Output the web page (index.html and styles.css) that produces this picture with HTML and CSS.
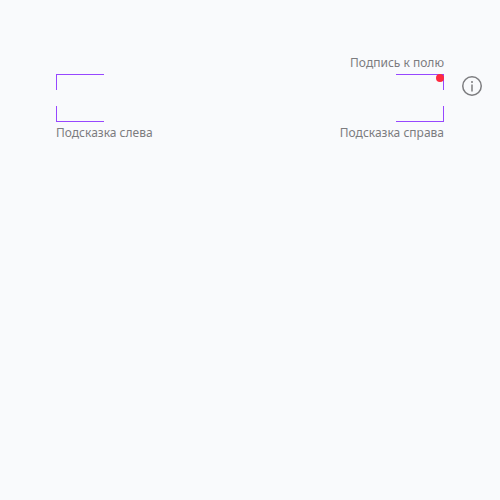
FILE: index.html
```html
<!DOCTYPE html>
<html lang="ru">
<head>
<meta charset="utf-8">
<title>Поле ввода</title>
<link rel="stylesheet" href="styles.css">
</head>
<body>
<main class="form">
  <div class="field">
    <label class="caption" for="field-input">Подпись к полю</label>
    <div class="control">
      <input class="input" id="field-input" type="text" aria-describedby="hint-left hint-right" required>
      <span class="corner top-left"></span>
      <span class="corner top-right"></span>
      <span class="corner bottom-left"></span>
      <span class="corner bottom-right"></span>
      <span class="indicator"></span>
      <button class="info" type="button" aria-label="Информация">
        <svg viewBox="0 0 24 24" width="24" height="24" fill="none" stroke="currentColor" stroke-width="1.5" aria-hidden="true">
          <circle cx="12" cy="12" r="9.25"/>
          <path d="M12 10.5V17.5"/>
          <circle cx="12" cy="8" r="1" fill="currentColor" stroke="none"/>
        </svg>
      </button>
    </div>
    <div class="hints">
      <span id="hint-left">Подсказка слева</span>
      <span id="hint-right">Подсказка справа</span>
    </div>
  </div>
</main>
</body>
</html>
```

FILE: styles.css
```css
body {
  margin: 0;
  background: #f9fafc;
  color: #7c7c7f;
  font: 12px/16px "Noto Sans", sans-serif;
}

.form {
  padding: 55px 56px;
}

.field {
  display: flex;
  flex-direction: column;
}

.caption {
  align-self: flex-end;
  margin-bottom: 3px;
}

.control {
  position: relative;
  height: 48px;
}

.input {
  box-sizing: border-box;
  width: 100%;
  height: 100%;
  padding: 0 16px;
  border: 0;
  outline: 0;
  background: transparent;
  font: inherit;
}

.corner {
  position: absolute;
  box-sizing: border-box;
  width: 48px;
  height: 16px;
  border: 0 solid #9747ff;
  pointer-events: none;
}

.top-left {
  top: 0;
  left: 0;
  border-width: 1px 0 0 1px;
}

.top-right {
  top: 0;
  right: 0;
  border-width: 1px 1px 0 0;
}

.bottom-left {
  bottom: 0;
  left: 0;
  border-width: 0 0 1px 1px;
}

.bottom-right {
  right: 0;
  bottom: 0;
  border-width: 0 1px 1px 0;
}

.indicator {
  position: absolute;
  top: 0;
  right: 0;
  width: 8px;
  height: 8px;
  border-radius: 50%;
  background: #ff293e;
}

.info {
  position: absolute;
  top: 0;
  left: 100%;
  display: flex;
  margin-left: 16px;
  padding: 0;
  border: 0;
  background: transparent;
  color: #7c7c7f;
}

.hints {
  display: flex;
  justify-content: space-between;
  margin-top: 3px;
}
```
